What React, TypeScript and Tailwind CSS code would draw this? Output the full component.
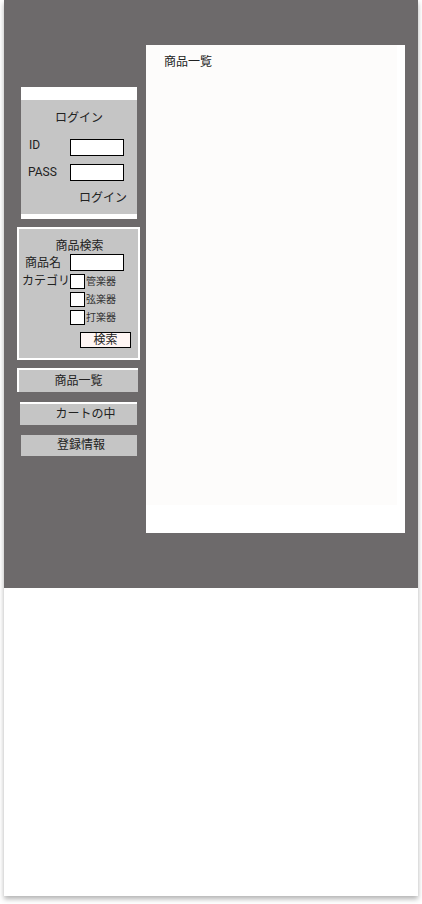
import React from "react";

const font = { fontFamily: 'Roboto, "Noto Sans CJK JP", sans-serif' };

function Check({ label }: { label: string }) {
  return (
    <div className="flex items-center h-[15px]">
      <div className="w-[15px] h-[15px] bg-white border border-black" />
      <span className="text-[10px] leading-none ml-[1px] text-[#333]">{label}</span>
    </div>
  );
}

export default function App() {
  return (
    <div className="w-[422px] h-[904px] bg-white" style={font}>
      <div className="ml-[4px] w-[414px] h-[896px] bg-white shadow-[0_3px_5px_rgba(0,0,0,0.3)] flex flex-col text-[#222]">
        <div className="h-[588px] bg-[#6d6a6b] flex">
          {/* left column */}
          <div className="w-[142px] flex flex-col">
            {/* login */}
            <div className="mt-[87px] ml-[17px] w-[116px] border-t-[13px] border-b-[5px] border-white bg-[#c5c5c5] h-[132px] flex flex-col pt-[10px]">
              <div className="text-[12px] leading-[16px] text-center">ログイン</div>
              <div className="mt-[13px] flex items-center h-[17px]">
                <span className="ml-[8px] w-[41px] text-[12px] leading-[16px] -mt-[6px]">ID</span>
                <div className="w-[54px] h-[17px] bg-white border border-black" />
              </div>
              <div className="mt-[8px] flex items-center h-[17px]">
                <span className="ml-[7px] w-[42px] text-[12px] leading-[16px] -mt-[2px]">PASS</span>
                <div className="w-[54px] h-[17px] bg-white border border-black" />
              </div>
              <div className="mt-[9px] text-[12px] leading-[16px] text-right pr-[10px]">ログイン</div>
            </div>
            {/* search */}
            <div className="mt-[8px] ml-[13px] w-[123px] h-[133px] border-2 border-white bg-[#c5c5c5] flex flex-col">
              <div className="mt-[9px] text-[12px] leading-[16px] text-center pl-[2px]">商品検索</div>
              <div className="flex items-center h-[17px]">
                <span className="ml-[6px] w-[45px] text-[12px] leading-[16px]">商品名</span>
                <div className="w-[54px] h-[17px] bg-white border border-black" />
              </div>
              <div className="mt-[3px] flex">
                <span className="ml-[3px] w-[48px] text-[12px] leading-[16px] -mt-[1px]">カテゴリ</span>
                <div className="flex flex-col gap-[3px]">
                  <Check label="管楽器" />
                  <Check label="弦楽器" />
                  <Check label="打楽器" />
                </div>
              </div>
              <div className="mt-[7px] ml-[61px] w-[51px] h-[16px] bg-[#fff6f4] border border-black text-[12px] leading-[14px] text-center">
                検索
              </div>
            </div>
            {/* nav */}
            <div className="mt-[8px] ml-[13px] w-[121px] h-[24px] border-t-2 border-l-2 border-white bg-[#c5c5c5] text-[12px] leading-[23px] text-center">
              商品一覧
            </div>
            <div className="mt-[10px] ml-[16px] w-[117px] h-[23px] border-t-2 border-white bg-[#c5c5c5] text-[12px] leading-[21px] text-center pl-[14px]">
              カートの中
            </div>
            <div className="mt-[10px] ml-[17px] w-[116px] h-[21px] bg-[#c5c5c5] text-[12px] leading-[21px] text-center pl-[4px]">
              登録情報
            </div>
          </div>
          {/* main panel */}
          <div className="mt-[45px] w-[259px] h-[488px] bg-white">
            <div className="w-[251px] h-[460px] bg-[#fdfcfb] pt-[9px] pl-[18px] text-[12px] leading-[16px]">
              商品一覧
            </div>
          </div>
        </div>
        <div className="flex-1 bg-white" />
      </div>
    </div>
  );
}
